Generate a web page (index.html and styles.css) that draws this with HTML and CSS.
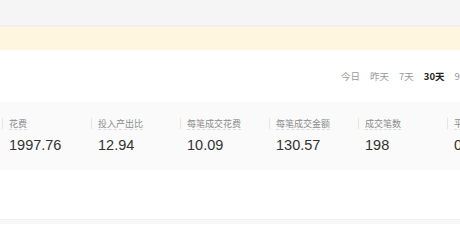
FILE: index.html
```html
<!DOCTYPE html>
<html lang="zh">
<head>
<meta charset="utf-8">
<link rel="stylesheet" href="styles.css">
</head>
<body>
<div class="page">
  <div class="topbar"></div>
  <div class="notice"></div>
  <div class="tabs-row">
    <div class="tabs">
      <span class="tab">今日</span>
      <span class="tab">昨天</span>
      <span class="tab">7天</span>
      <span class="tab active">30天</span>
      <span class="tab">90天</span>
    </div>
  </div>
  <div class="metrics">
    <div class="metric"><span class="label">花费</span><span class="value">1997.76</span></div>
    <div class="metric"><span class="label">投入产出比</span><span class="value">12.94</span></div>
    <div class="metric"><span class="label">每笔成交花费</span><span class="value">10.09</span></div>
    <div class="metric"><span class="label">每笔成交金额</span><span class="value">130.57</span></div>
    <div class="metric"><span class="label">成交笔数</span><span class="value">198</span></div>
    <div class="metric"><span class="label">平均点击花费</span><span class="value">0.52</span></div>
  </div>
  <div class="chart-area"></div>
  <div class="footer-line"></div>
</div>
</body>
</html>
```

FILE: styles.css
```css
html, body {
  margin: 0;
  padding: 0;
  background: #ffffff;
  overflow: hidden;
}
body {
  font-family: "Noto Sans CJK SC", "Liberation Sans", sans-serif;
  width: 460px;
  height: 230px;
}
.page {
  width: 460px;
  overflow: hidden;
}
.topbar {
  height: 25px;
  background: #f5f5f6;
}
.notice {
  height: 23px;
  background: #fff6df;
  border-top: 2px solid #f4eef2;
}
.tabs-row {
  height: 52px;
  display: flex;
  align-items: center;
  padding-left: 341px;
  background: #fff;
}
.tabs {
  display: flex;
  gap: 10px;
  white-space: nowrap;
}
.tab {
  font-size: 9.5px;
  color: #9a9a9a;
  line-height: 12px;
}
.tab.active {
  color: #222;
  font-weight: 700;
}
.metrics {
  height: 68px;
  background: #fafafa;
  display: flex;
  padding-left: 2px;
  box-sizing: border-box;
  padding-top: 16px;
  white-space: nowrap;
}
.metric {
  flex: 0 0 89px;
  box-sizing: border-box;
  position: relative;
  padding-left: 7px;
  display: flex;
  flex-direction: column;
}
.metric::before {
  content: "";
  position: absolute;
  left: 0;
  top: 0;
  height: 11px;
  width: 1px;
  background: #e6e6e6;
}
.label {
  font-size: 9px;
  color: #8c8c8c;
  line-height: 11px;
  align-self: flex-start;
  border-bottom: 1px dashed #dcdcdc;
}
.value {
  margin-top: 5px;
  font-family: "Liberation Sans", Arial, sans-serif;
  font-size: 14.5px;
  line-height: 20px;
  color: #333;
}
.chart-area {
  height: 49px;
  background: #fff;
}
.footer-line {
  height: 4px;
  background: #f7f7f7;
  border-top: 1px solid #f0f0f0;
}
```
